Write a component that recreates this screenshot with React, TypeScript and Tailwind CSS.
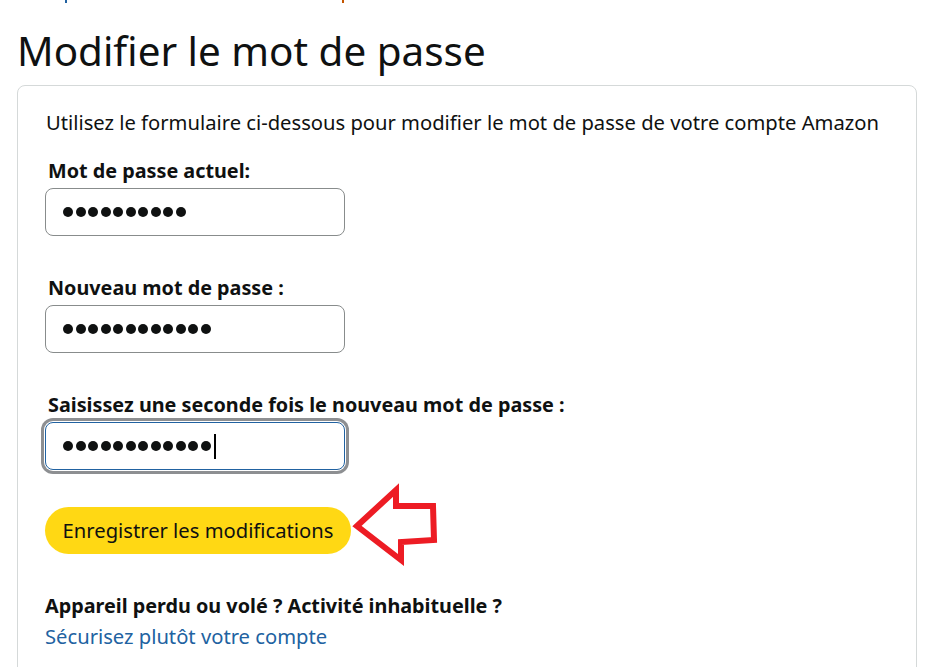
import React from "react";

const font = { fontFamily: '"Noto Sans", "Open Sans", Arial, sans-serif' };

function Dots({ n, caret }: { n: number; caret?: boolean }) {
  return (
    <div className="flex items-center gap-[2.5px]">
      {Array.from({ length: n }).map((_, i) => (
        <span key={i} className="block w-[10px] h-[10px] rounded-full bg-[#0f1111]" />
      ))}
      {caret && <span className="block w-[1.5px] h-[25px] bg-black ml-[1px]" />}
    </div>
  );
}

function Field({ label, n, focused }: { label: string; n: number; focused?: boolean }) {
  return (
    <div className="flex flex-col">
      <div className="h-[24px] leading-[24px] text-[19.8px] font-bold text-[#0f1111] pl-[3px] whitespace-nowrap">{label}</div>
      <div
        className={
          focused
            ? "mt-[5px] w-[300px] h-[48px] rounded-[8px] border border-[#2162a1] ring-3 ring-[#8d8f92] ring-offset-1 flex items-center pl-[17px] bg-white"
            : "mt-[5px] w-[300px] h-[48px] rounded-[8px] border border-[#888c8c] flex items-center pl-[17px] bg-white"
        }
      >
        <Dots n={n} caret={focused} />
      </div>
    </div>
  );
}

export default function App() {
  return (
    <div className="w-[933px] h-[667px] overflow-hidden bg-white text-[#0f1111]" style={font}>
      <div className="flex h-[3px]">
        <span className="ml-[65px] w-[2px] h-[3px] bg-[#2162a1]" />
        <span className="ml-[275px] w-[2px] h-[3px] bg-[#c45500]" />
      </div>
      <h1 className="mt-[24px] ml-[17px] text-[40.4px] leading-[48px] font-normal text-[#0f1111] whitespace-nowrap">
        Modifier le mot de passe
      </h1>
      <div className="mt-[10px] ml-[17px] w-[900px] h-[700px] border border-[#d5d9d9] rounded-[8px] pt-[24px] pl-[27px]">
        <div className="h-[24px] leading-[24px] text-[20.2px] pl-[1px] whitespace-nowrap">
          Utilisez le formulaire ci-dessous pour modifier le mot de passe de votre compte Amazon
        </div>
        <div className="mt-[25px] flex flex-col gap-[40px]">
          <Field label="Mot de passe actuel:" n={10} />
          <Field label="Nouveau mot de passe :" n={12} />
          <Field label="Saisissez une seconde fois le nouveau mot de passe :" n={12} focused />
        </div>
        <div className="relative mt-[37px] w-[306px]">
          <button className="w-[306px] h-[47px] rounded-full bg-[#ffd814] text-[20.2px] text-[#0f1111] flex items-center justify-center whitespace-nowrap">
            Enregistrer les modifications
          </button>
          <svg
            className="absolute left-[305px] top-[-27px]"
            width="95"
            height="90"
            viewBox="350 480 95 90"
          >
            <polygon
              points="357,526 396,490 396,506 433,506 434,540 401,542 401,560"
              fill="white"
              stroke="#ed1c24"
              strokeWidth="6"
              strokeLinejoin="miter"
              strokeMiterlimit="10"
            />
          </svg>
        </div>
        <div className="mt-[40px] h-[24px] leading-[24px] text-[19.8px] font-bold whitespace-nowrap">
          Appareil perdu ou volé ? Activité inhabituelle ?
        </div>
        <div className="mt-[6px] h-[24px] leading-[24px] text-[20.2px] text-[#2162a1] whitespace-nowrap">
          Sécurisez plutôt votre compte
        </div>
      </div>
    </div>
  );
}
